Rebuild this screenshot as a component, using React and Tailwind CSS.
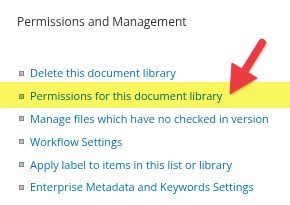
import React from "react";

const items = [
  "Delete this document library",
  "Permissions for this document library",
  "Manage files which have no checked in version",
  "Workflow Settings",
  "Apply label to items in this list or library",
  "Enterprise Metadata and Keywords Settings",
];

export default function App() {
  return (
    <div
      className="relative w-[290px] h-[205px] bg-white overflow-hidden"
      style={{ fontFamily: '"Open Sans", "Noto Sans", sans-serif' }}
    >
      <div className="pl-[17px] pt-[13px] text-[12px] leading-[18px] text-[#333333]">
        Permissions and Management
      </div>

      <ul className="mt-[31px] pl-[19px]">
        {items.map((label) => (
          <li key={label} className="flex items-center h-[22.8px] gap-[6px]">
            <span className="w-[5px] h-[5px] border border-[#8c8c8c] bg-[#bdbdbd] shrink-0" />
            <span className="text-[11px] leading-[16px] text-[#0072c6] whitespace-nowrap">
              {label}
            </span>
          </li>
        ))}
      </ul>

      {/* highlighter stroke */}
      <div className="absolute left-0 right-0 top-[82px] h-[26px] bg-[#f8f65c] mix-blend-multiply" />

      {/* red arrow */}
      <svg className="absolute left-0 top-0" width="290" height="205" viewBox="0 0 290 205">
        <defs>
          <filter id="sh" x="-20%" y="-20%" width="140%" height="140%">
            <feDropShadow dx="1" dy="1" stdDeviation="1" floodColor="#000" floodOpacity="0.25" />
          </filter>
        </defs>
        <g filter="url(#sh)" fill="#ec3b42" stroke="#ec3b42">
          <line x1="262" y1="43" x2="244" y2="72" strokeWidth="8" strokeLinecap="round" />
          <polygon points="230,94 232,63 257,78" strokeWidth="1" strokeLinejoin="round" />
        </g>
      </svg>
    </div>
  );
}
